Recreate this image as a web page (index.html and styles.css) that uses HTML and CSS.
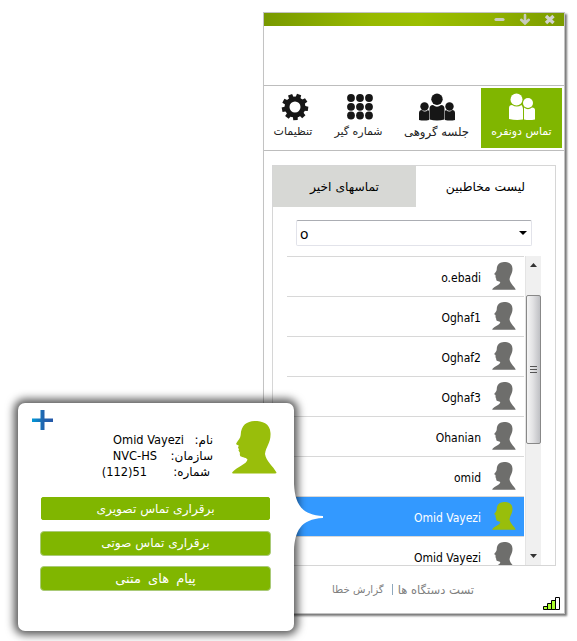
FILE: index.html
```html
<!DOCTYPE html>
<html lang="fa">
<head>
<meta charset="utf-8">
<title>تماس دونفره</title>
<link rel="stylesheet" href="styles.css">
</head>
<body>
<svg class="defs" width="0" height="0">
  <symbol id="head" viewBox="0 0 45 53"><path d="M22.500 0C30 0 38 2 38.500 12C39 22 34 25 33 33C34 40 41 45 44.500 51.500Q44.500 52.500 43 52.500H1Q-.3 52 .5 51C5 46 15 43 15.500 38.500C14 36 8.500 36.500 8 34.500C7.500 33 8.300 32 7.500 31L6.500 29.500L7 28L6 27L6.700 24.500L4.500 23.500Q3.800 22.800 4.500 22C6 19.500 8.500 17 8.700 14C9 4 15 .3 22.500 0Z"/></symbol>
</svg>
<main class="window">
  <header class="titlebar">
    <svg width="62" height="13" viewBox="0 0 62 13"><path d="M2 6.500H9" stroke="#c9cbc0" stroke-width="3.200" stroke-linecap="round"/><path d="M31 2V10M27.200 6.800L31 10.500L34.800 6.800" fill="none" stroke="#c8cbbd" stroke-width="2.600" stroke-linecap="round"/><path d="M52 3L59.500 10M59.500 3L52 10" stroke="#d2d3ce" stroke-width="3.400"/></svg>
  </header>
  <div class="brand"></div>
  <nav class="toolbar">
    <div class="tool settings">
      <svg width="28" height="28" viewBox="-14 -14 28 28"><circle r="8" fill="none" stroke="#161616" stroke-width="5"/><g fill="#161616"><path id="tooth" d="M-2.500 -9L-2.200 -13.200H2.200L2.500 -9Z" transform="rotate(18)"/><use href="#tooth" transform="rotate(40)"/><use href="#tooth" transform="rotate(80)"/><use href="#tooth" transform="rotate(120)"/><use href="#tooth" transform="rotate(160)"/><use href="#tooth" transform="rotate(200)"/><use href="#tooth" transform="rotate(240)"/><use href="#tooth" transform="rotate(280)"/><use href="#tooth" transform="rotate(320)"/></g></svg>
      <span>تنظیمات</span>
    </div>
    <div class="tool dialer">
      <svg width="28" height="28" viewBox="0 0 28 28" fill="#161616"><circle cx="5" cy="5" r="3.900"/><circle cx="14" cy="5" r="3.900"/><circle cx="23" cy="5" r="3.900"/><circle cx="5" cy="13.800" r="3.900"/><circle cx="14" cy="13.800" r="3.900"/><circle cx="23" cy="13.800" r="3.900"/><circle cx="5" cy="22.500" r="3.900"/><circle cx="14" cy="22.500" r="3.900"/><circle cx="23" cy="22.500" r="3.900"/></svg>
      <span>شماره گیر</span>
    </div>
    <div class="tool group">
      <svg width="36" height="28" viewBox="0 0 36 28" fill="#161616"><circle cx="5.500" cy="13.500" r="4.200"/><path d="M0 27V20Q0 17 3 17Q5.500 20 9 17L10 18V27Q5 28 0 27Z"/><circle cx="30.500" cy="13.500" r="4.200"/><path d="M26 27V18L27 17Q30.500 20 33 17Q36 17 36 20V27Q31 28 26 27Z"/><circle cx="18" cy="6.300" r="5.700"/><path d="M10.500 26.500V16Q10.500 12 14 12Q18 15.500 22 12Q25.500 12 25.500 16V26.500Q18 28.500 10.500 26.500Z"/></svg>
      <span>جلسه گروهی</span>
    </div>
    <div class="tool pair active">
      <svg width="28" height="28" viewBox="0 0 28 28" fill="#fff"><circle cx="8.500" cy="6.500" r="6"/><circle cx="20" cy="10" r="5"/><path d="M1 25V15Q1 12 4 12Q9 15 13.500 12Q15 14 15 16V26.500Q8 27.500 1 26Z"/><path d="M16 26.500V14.500Q20 18 24 14.500Q27 14.500 27 17V26.500Q21 27.500 16 26.500Z"/></svg>
      <span>تماس دونفره</span>
    </div>
  </nav>
  <section class="panel">
    <div class="tabs"><div class="tab recent"><span>تماسهای اخیر</span></div><div class="tab current"><span>لیست مخاطبین</span></div></div>
    <div class="combo"><span>o</span><svg width="8" height="4" viewBox="0 0 8 4"><path d="M0 0H8L4 4Z"/></svg></div>
    <div class="list">
      <div class="rows">
        <div class="row"><span>o.ebadi</span><svg><use href="#head"/></svg></div>
        <div class="row"><span>Oghaf1</span><svg><use href="#head"/></svg></div>
        <div class="row"><span>Oghaf2</span><svg><use href="#head"/></svg></div>
        <div class="row"><span>Oghaf3</span><svg><use href="#head"/></svg></div>
        <div class="row"><span>Ohanian</span><svg><use href="#head"/></svg></div>
        <div class="row"><span>omid</span><svg><use href="#head"/></svg></div>
        <div class="row selected"><span>Omid Vayezi</span><svg><use href="#head"/></svg></div>
        <div class="row"><span>Omid Vayezi</span><svg><use href="#head"/></svg></div>
      </div>
      <div class="scrollbar">
        <svg class="up" width="7" height="4" viewBox="0 0 7 4"><path d="M0 4L3.500 0L7 4Z"/></svg>
        <div class="thumb"><i></i><i></i><i></i></div>
        <svg class="down" width="7" height="4" viewBox="0 0 7 4"><path d="M0 0H7L3.500 4Z"/></svg>
      </div>
    </div>
  </section>
  <footer class="footer">
    <div class="links" dir="rtl"><span class="devices">تست دستگاه ها</span><i></i><span class="report">گزارش خطا</span></div>
    <svg class="signal" width="17" height="13" viewBox="0 0 17 13" stroke="#000" fill="#adff2f"><path d="M.5 12.500V9.500H4.500V12.500ZM4.500 12.500V6.500H8.500V12.500ZM8.500 12.500V3.500H12.500V12.500Z"/><path d="M12.500 12.500V.5H16.500V12.500Z" fill="#fff"/></svg>
  </footer>
</main>
<aside class="popup">
  <svg class="pointer" width="30" height="66" viewBox="0 0 30 66"><path d="M0 0C1 18 6 31 29 32V34C6 35 1 48 0 66Z" fill="#fff"/></svg>
  <div class="card">
    <svg class="plus" width="22" height="22" viewBox="0 0 22 22"><defs><linearGradient id="blue"><stop stop-color="#0099d8"/><stop offset=".55" stop-color="#2264ae"/><stop offset="1" stop-color="#2458a8"/></linearGradient></defs><path d="M8.500 1H12.500V9.500H21V13H12.500V21H8.500V13H0V9.500H8.500Z" fill="url(#blue)"/></svg>
    <dl class="info">
      <div class="line"><dt class="name">نام:</dt><dd>Omid Vayezi</dd></div>
      <div class="line"><dt class="org">سازمان:</dt><dd>NVC-HS</dd></div>
      <div class="line"><dt class="number">شماره:</dt><dd>(112)51</dd></div>
    </dl>
    <svg class="avatar"><use href="#head"/></svg>
  </div>
  <div class="actions">
    <div class="action video"><span>برقراری تماس تصویری</span></div>
    <div class="action voice"><span>برقراری تماس صوتی</span></div>
    <div class="action message"><span>پیام های متنی</span></div>
  </div>
</aside>
</body>
</html>
```
FILE: styles.css
```css
* { box-sizing: border-box; }
body { margin: 0; width: 577px; height: 641px; overflow: hidden; background: #fff; color: #000; font: 11px "DejaVu Sans", sans-serif; position: relative; }
svg { display: block; flex: none; }
.defs { position: absolute; }
span, dt, dd { white-space: nowrap; }
.window { width: 302px; height: 602px; position: absolute; left: 263px; top: 12px; border: 1px solid #c3c3c3; background: #fff; box-shadow: 2px 2px 2px #777; display: flex; flex-direction: column; }
.window > * { flex: none; }
.titlebar { height: 13px; background: linear-gradient(90deg, #789900, #97b900 35%, #9bbf00 52%, #91b200 75%, #7b9b00); display: flex; justify-content: flex-end; padding-right: 8px; }
.brand { height: 60px; border-bottom: 1px solid #bdbdbd; }
.toolbar { height: 65px; border-bottom: 1px solid #bdbdbd; display: flex; padding: 2px 2px 2px 0; }
.tool { display: flex; flex-direction: column; align-items: center; padding-top: 5px; color: #222; }
.tool span { line-height: 16px; margin-top: 3px; }
.settings { width: 61px; }
.settings span { margin-right: 3px; }
.dialer { width: 69px; }
.dialer span { margin-right: 2px; }
.group { width: 87px; }
.group svg { margin-right: 2px; }
.group span { font-size: 11.700px; margin-right: 2px; }
.pair { width: 81px; }
.active { background: #80b600; color: #fff; }
.panel { width: 284px; height: 401px; margin: 14px 0 0 8px; border: 1px solid #d6d6d6; }
.tabs { display: flex; height: 41px; }
.tab { width: 143px; display: flex; justify-content: center; line-height: 42px; font-size: 12.300px; }
.recent { background: #d7d8d5; }
.current { width: 139px; }
.combo { width: 236px; height: 26px; margin: 13px 0 0 23px; border: 1px solid #e2e3ea; border-top-color: #abadb3; border-radius: 2px; display: flex; align-items: center; justify-content: space-between; padding: 0 4px 0 3px; font: 14px "Noto Sans", sans-serif; }
.list { display: flex; width: 254px; height: 309px; margin: 10px 0 0 14px; overflow: hidden; }
.rows { width: 237px; margin-right: 1px; }
.row { height: 40px; border-top: 1px solid #d8d8d8; display: flex; align-items: center; justify-content: flex-end; padding-right: 8px; gap: 11px; font: 12px "DejaVu Sans Condensed", "DejaVu Sans", sans-serif; }
.row span { padding-top: 2px; }
.row svg { width: 24px; height: 28px; margin-bottom: 1px; fill: #6e6e6c; }
.selected { background: #3399ff; color: #fff; }
.selected svg { fill: #99be0b; }
.scrollbar { width: 16px; background: #f0f0f0; border-left: 1px solid #e4e4e4; display: flex; flex-direction: column; align-items: center; fill: #333; }
.up { margin-top: 7px; }
.thumb { width: 15px; height: 149px; margin-top: 28px; border: 1px solid #888; border-radius: 2px; background: linear-gradient(90deg, #f5f5f5, #e2e2e4 45%, #bfc0c4); display: flex; flex-direction: column; align-items: center; justify-content: center; gap: 2px; }
.thumb i { width: 7px; height: 1px; background: #555; }
.down { margin: auto 0 7px; }
.footer { height: 47px; display: flex; position: relative; color: #808080; }
.links { display: flex; align-items: center; height: 47px; margin-left: 68px; gap: 5px; }
.devices { font-size: 11.600px; }
.report { font-size: 10.200px; margin-right: 3px; }
.links i { width: 1px; height: 11px; background: #8ea8bd; }
.signal { position: absolute; right: 4px; bottom: 3px; }
.popup { position: absolute; left: 18px; top: 403px; width: 276px; height: 228px; border-radius: 7px; background: #fff; box-shadow: 0 0 9px 4px rgba(0,0,0,.65); }
.pointer { position: absolute; left: 276px; top: 81px; }
.card { height: 94px; display: flex; }
.plus { margin: 6px 0 0 14px; }
.info { width: 142px; margin: 29px 0 0 17px; direction: rtl; font-size: 12px; line-height: 16px; }
.line { display: flex; height: 16px; }
.info dt, .info dd { margin: 0; }
.info dd { direction: ltr; font: 12.700px/16px "DejaVu Sans Condensed", "DejaVu Sans", sans-serif; }
.name { width: 29px; }
.org { width: 56px; }
.number { width: 66px; padding-right: 3px; }
.avatar { width: 45px; height: 53px; fill: #99be0b; margin: 18px 0 0 19px; }
.actions { display: flex; flex-direction: column; padding-left: 22px; }
.action { width: 231px; height: 25px; margin-bottom: 10px; border: 1px solid #aaca78; border-radius: 4px; background: #80b600; color: #fff; display: flex; justify-content: center; line-height: 23px; font-size: 12.200px; }
.video { width: 229px; height: 23px; margin: 0 0 11px 1px; border-color: #80b600; border-radius: 2px; }
.message { font-size: 13px; word-spacing: 3px; }
```
